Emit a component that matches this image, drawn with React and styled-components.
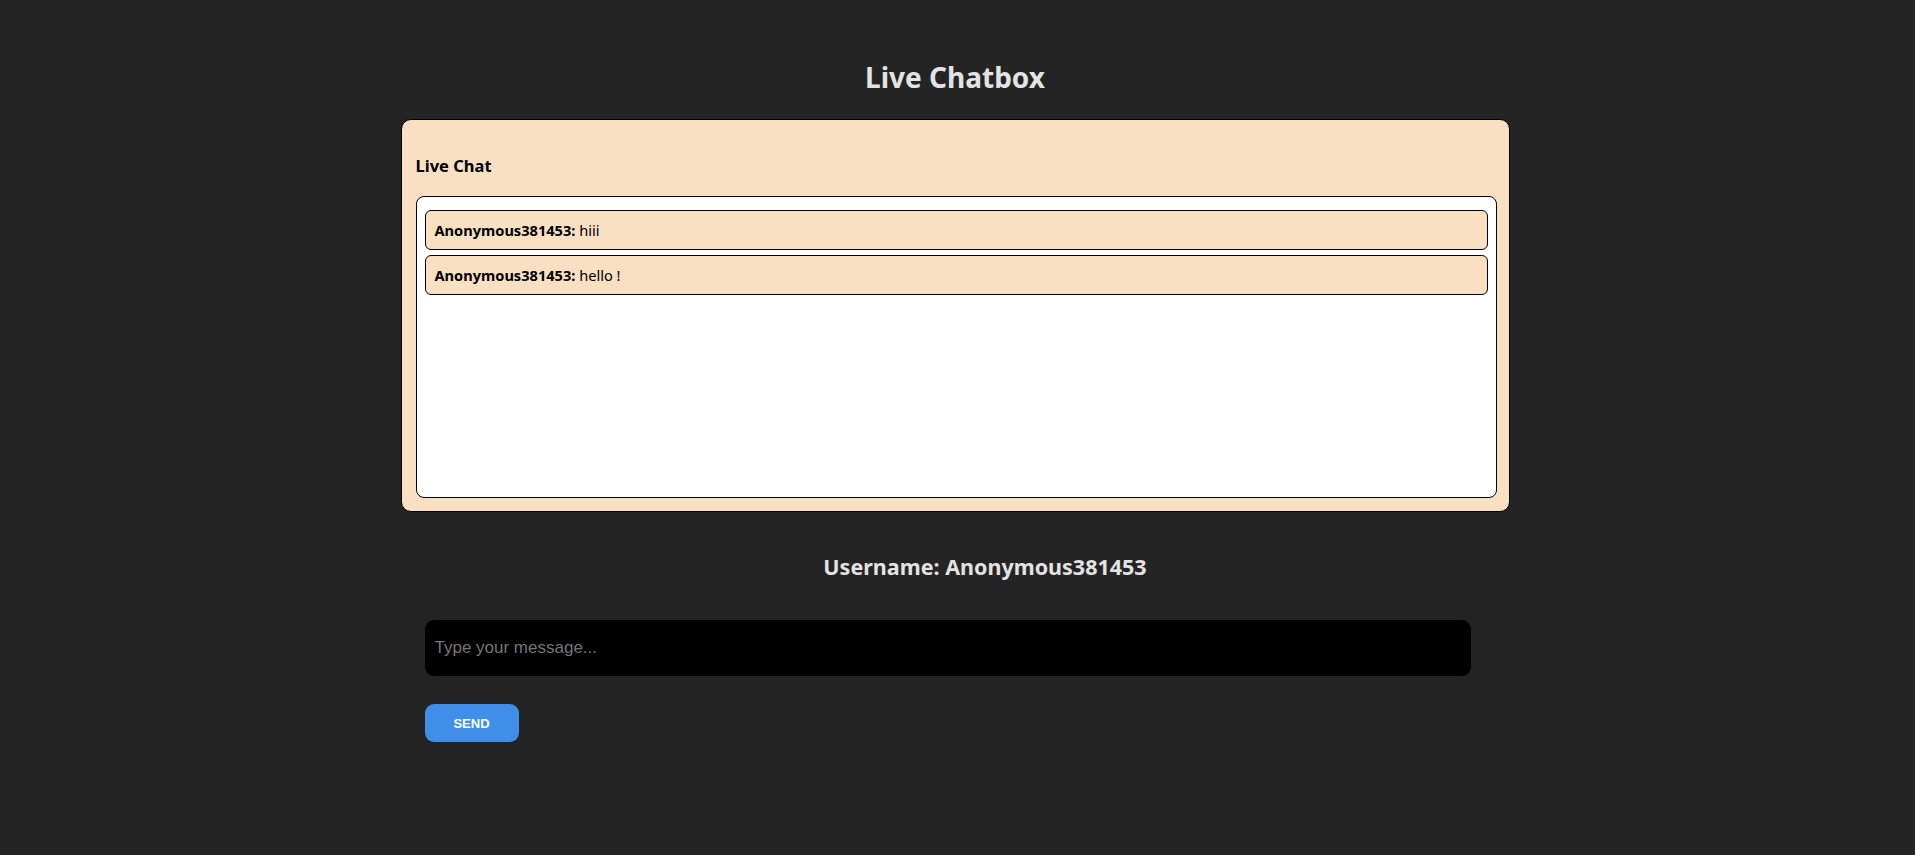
import React, { useState } from 'react';
import styled, { createGlobalStyle } from 'styled-components';

const GlobalStyle = createGlobalStyle`
   html, body {
      margin: 0;
      padding: 0;
      background: #242424;
   }
   body {
      font-family: "Noto Sans", "Open Sans", sans-serif;
      color: rgba(255, 255, 255, 0.87);
      min-height: 855px;
   }
`;

const Page = styled.div`
   display: flex;
   flex-direction: column;
   align-items: center;
   padding: 57px 5px 0 0;
`;

const Title = styled.h1`
   margin: 0 0 22px;
   font-size: 28px;
   line-height: 40px;
   font-weight: 700;
   color: #e3e3e3;
`;

const Card = styled.section`
   box-sizing: border-box;
   width: 1109px;
   height: 393px;
   display: flex;
   flex-direction: column;
   background: #f9e0c3;
   border: 1px solid #000;
   border-radius: 10px;
   padding: 35px 12px 13px 14px;
`;

const CardTitle = styled.h3`
   margin: 0 0 19px;
   font-size: 16.5px;
   line-height: 22px;
   font-weight: 700;
   color: #000;
`;

const MessageList = styled.div`
   flex: 1;
   background: #fff;
   border: 1px solid #000;
   border-radius: 8px;
   padding: 8px;
   overflow-y: auto;
`;

const Message = styled.div`
   margin: 5px 0;
   padding: 8px 9px;
   background: #f9e0c3;
   border: 1px solid #000;
   border-radius: 6px;
   font-size: 14.6px;
   line-height: 22px;
   color: #000;

   strong {
      font-weight: 700;
   }
`;

const Bottom = styled.div`
   box-sizing: border-box;
   width: 1109px;
   display: flex;
   flex-direction: column;
   align-items: flex-start;
   padding: 0 22px 0 24px;
`;

const Username = styled.h2`
   align-self: stretch;
   margin: 40px 0 38px;
   padding-left: 58px;
   text-align: center;
   font-size: 21.5px;
   line-height: 30px;
   font-weight: 700;
   color: #e3e3e3;
`;

const Input = styled.input`
   box-sizing: border-box;
   width: 1046px;
   height: 56px;
   padding: 0 10px;
   border: none;
   border-radius: 9px;
   background: #000;
   color: #fff;
   font-family: "Liberation Sans", Arial, sans-serif;
   font-size: 17px;
   outline: none;

   &::placeholder {
      color: #757575;
   }
`;

const SendButton = styled.button`
   margin-top: 28px;
   width: 94px;
   height: 38px;
   border: none;
   border-radius: 9px;
   background: #3f8fe8;
   color: #fff;
   font-family: "Liberation Sans", Arial, sans-serif;
   font-size: 13px;
   font-weight: 700;
   cursor: pointer;
`;

const initialMessages = [
   { user: 'Anonymous381453', text: 'hiii' },
   { user: 'Anonymous381453', text: 'hello !' },
];

export default function App() {
   const [messages, setMessages] = useState(initialMessages);
   const [draft, setDraft] = useState('');
   const username = 'Anonymous381453';

   const send = () => {
      if (!draft.trim()) return;
      setMessages([...messages, { user: username, text: draft }]);
      setDraft('');
   };

   return (
      <>
         <GlobalStyle />
         <Page>
            <Title>Live Chatbox</Title>
            <Card>
               <CardTitle>Live Chat</CardTitle>
               <MessageList>
                  {messages.map((m, i) => (
                     <Message key={i}>
                        <strong>{m.user}:</strong> {m.text}
                     </Message>
                  ))}
               </MessageList>
            </Card>
            <Bottom>
               <Username>Username: {username}</Username>
               <Input
                  placeholder="Type your message..."
                  value={draft}
                  onChange={(e) => setDraft(e.target.value)}
                  onKeyDown={(e) => e.key === 'Enter' && send()}
               />
               <SendButton onClick={send}>SEND</SendButton>
            </Bottom>
         </Page>
      </>
   );
}
